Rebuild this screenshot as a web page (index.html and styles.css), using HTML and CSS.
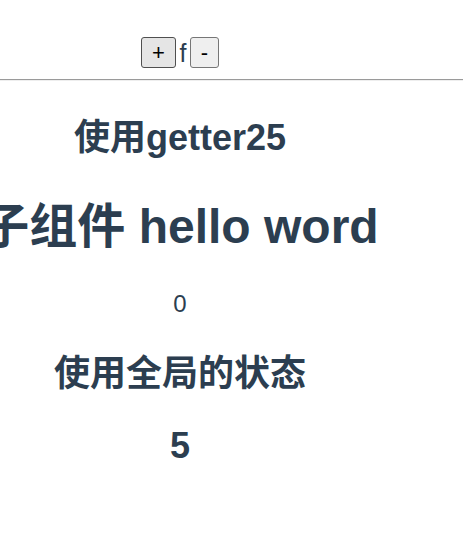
FILE: index.html
```html
<!DOCTYPE html>
<html>
<head>
<meta charset="utf-8">
<link rel="stylesheet" href="styles.css">
</head>
<body>
<div class="app">
  <div class="controls">
    <button class="btn btn-hover">+</button><span class="f">f</span><button class="btn">-</button>
  </div>
  <hr class="rule">
  <div class="content">
    <h2 class="title">使用getter25</h2>
    <h1 class="big">子组件 hello word</h1>
    <div class="count">0</div>
    <h2 class="title global">使用全局的状态</h2>
    <h2 class="title num">5</h2>
  </div>
</div>
</body>
</html>
```
FILE: styles.css
```css
html, body {
  margin: 0;
  padding: 0;
  background: #fff;
}
.app {
  font-family: "Liberation Sans", "Noto Sans CJK SC", Arial, sans-serif;
  color: #2c3e50;
}
.controls {
  width: 360px;
  display: flex;
  justify-content: center;
  align-items: center;
  padding-top: 37px;
  height: 31px;
}
.btn {
  font-family: "Liberation Sans", Arial, sans-serif;
  font-size: 22px;
  line-height: 25px;
  height: 31px;
  width: 29px;
  padding: 0;
  border: 1.5px solid #767676;
  border-radius: 3px;
  background: #efefef;
  color: #000;
  margin: 0;
}
.btn-hover {
  width: 35px;
  background: #e5e5e5;
  border-color: #4f4f4f;
}
.f {
  font-size: 25px;
  line-height: 28px;
  margin: 0;
  width: 14px;
  text-align: center;
}
.rule {
  margin: 11px 0 0 0;
  border: 0;
  border-top: 1px solid #9a9a9a;
  border-bottom: 1px solid #eeeeee;
  height: 0;
}
.content {
  width: 360px;
  display: flex;
  flex-direction: column;
  align-items: center;
}
.content > * {
  white-space: nowrap;
}
.title {
  font-size: 36px;
  font-weight: bold;
  line-height: 42px;
  margin: 36px 0 0 0;
}
.big {
  font-size: 48px;
  font-weight: bold;
  line-height: 56px;
  margin: 40px 0 0 0;
}
.count {
  font-size: 24px;
  line-height: 28px;
  margin: 35px 0 0 0;
}
.global {
  margin-top: 35px;
}
.num {
  margin-top: 30px;
}
```
